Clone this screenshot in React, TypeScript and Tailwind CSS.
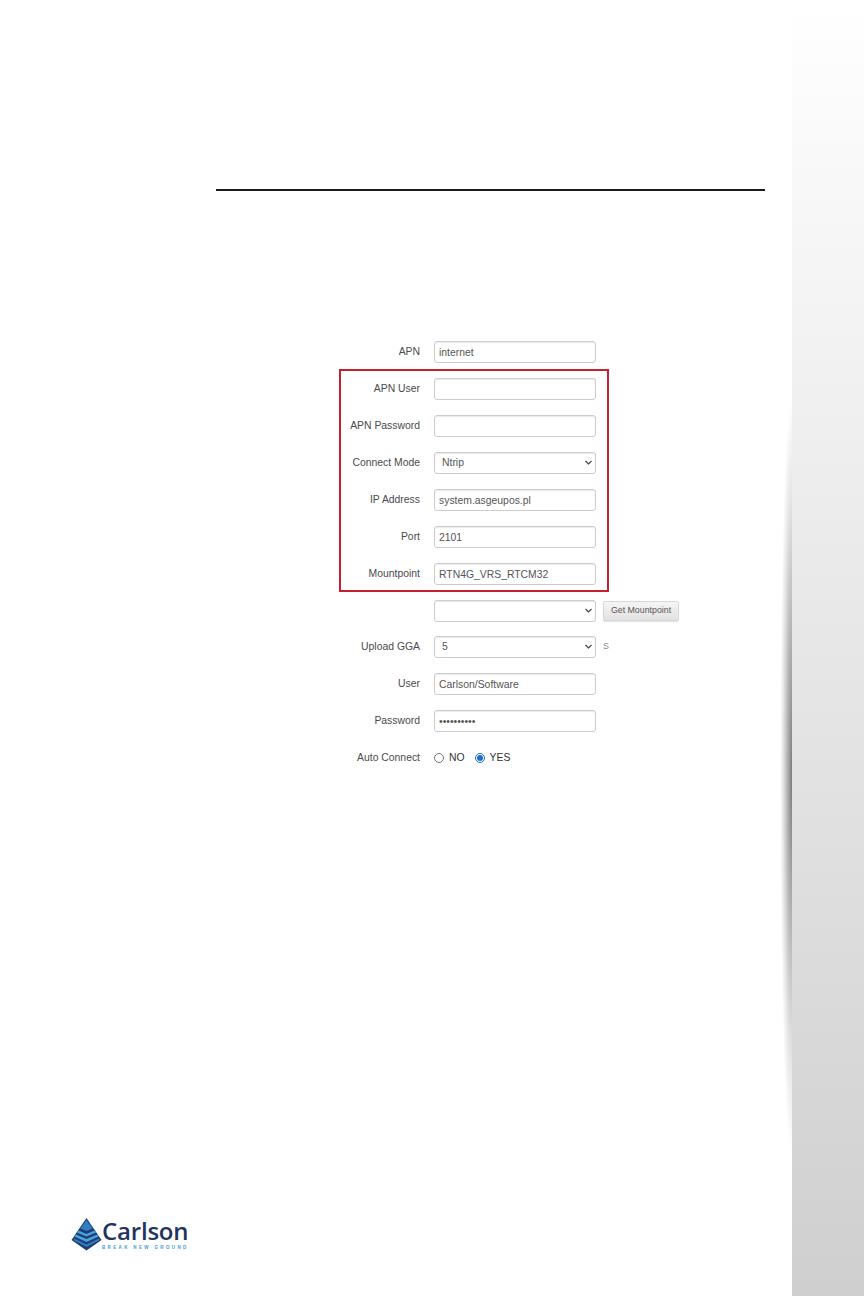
import React from 'react';

const textInput =
  'block w-[162px] h-[22px] px-[4px] border border-[#ccc] rounded-[3px] bg-white text-[10.4px] text-[#555] shadow-[inset_0_1px_1px_rgba(0,0,0,0.08)] outline-none';

function Row({
  label,
  className = '',
  children,
}: {
  label?: string;
  className?: string;
  children: React.ReactNode;
}) {
  return (
    <div className={`flex items-center h-[22px] ${className}`}>
      <div className="w-[79px] shrink-0 text-right text-[10.4px] text-[#4a4a4a]">{label}</div>
      <div className="ml-[14px] flex items-center">{children}</div>
    </div>
  );
}

function Field({ value = '', type = 'text' }: { value?: string; type?: string }) {
  return <input type={type} value={value} readOnly className={textInput} />;
}

function Select({ value = '' }: { value?: string }) {
  return (
    <div className="relative w-[162px] h-[22px] shrink-0">
      <select
        value={value}
        onChange={() => {}}
        className={`${textInput} appearance-none pl-[7px]`}
      >
        <option value={value}>{value}</option>
      </select>
      <svg
        className="absolute right-[4px] top-[8px] pointer-events-none"
        width="7"
        height="6"
        viewBox="0 0 7 6"
        fill="none"
      >
        <path d="M0.500 1l3 3 3-3" stroke="#444" strokeWidth="1.2" />
      </svg>
    </div>
  );
}

function Logo() {
  return (
    <div className="flex items-start">
      <svg width="31" height="33" viewBox="0 0 31 33" className="shrink-0">
        <path d="M15.500 0L30.500 22L15.500 32.500L0.500 22Z" fill="#1f3d73" />
        <path d="M15.500 2L21.500 10.500L15.500 13L9.500 10.500Z" fill="#2f7fc1" />
        <path d="M7.500 12.500L15.500 16L23.500 12.500L25 14.500L15.500 18.500L6 14.500Z" fill="#45a5dc" />
        <path d="M4.800 16.500L15.500 21L26.200 16.500L27.500 18.500L15.500 24L3.500 18.500Z" fill="#45a5dc" />
        <path d="M3 20.500L15.500 26.500L28 20.500L28.500 22L15.500 29L2.500 22Z" fill="#2f7fc1" />
      </svg>
      <div className="flex flex-col items-start">
        <div className="font-['Open_Sans',sans-serif] font-semibold text-[24px] leading-[25px] tracking-[-0.2px] text-[#1f3560]">
          Carlson
        </div>
        <div className="font-['Liberation_Sans',sans-serif] font-bold text-[4.500px] leading-[6px] mt-[2px] tracking-[2.35px] whitespace-nowrap text-[#3f9bd2]">
          BREAK NEW GROUND
        </div>
      </div>
    </div>
  );
}

export default function App() {
  return (
    <div className="w-[864px] h-[1296px] flex bg-white font-['Liberation_Sans',Arial,sans-serif] overflow-hidden">
      <main className="relative w-[792px] h-full flex flex-col">
        <div className="mt-[189px] ml-[216px] w-[549px] h-[2px] bg-[#1a1a1a]" />

        <section className="mt-[150px] ml-[339px] w-[270px] flex flex-col">
          <div className="pl-[2px]">
            <Row label="APN">
              <Field value="internet" />
            </Row>
          </div>

          <div className="mt-[6px] border-2 border-[#c4202f] pt-[7px] pb-[5px] flex flex-col gap-[15px]">
            <Row label="APN User">
              <Field />
            </Row>
            <Row label="APN Password">
              <Field />
            </Row>
            <Row label="Connect Mode">
              <Select value="Ntrip" />
            </Row>
            <Row label="IP Address">
              <Field value="system.asgeupos.pl" />
            </Row>
            <Row label="Port">
              <Field value="2101" />
            </Row>
            <Row label="Mountpoint">
              <Field value="RTN4G_VRS_RTCM32" />
            </Row>
          </div>

          <div className="mt-[8px] pl-[2px] flex flex-col gap-[15px]">
            <Row>
              <Select />
              <button className="ml-[7px] w-[76px] h-[20px] shrink-0 border border-[#d8d8d8] rounded-[2px] bg-gradient-to-b from-[#f5f5f5] to-[#e2e2e2] text-[8.800px] text-[#555] whitespace-nowrap shadow-[0_1px_1px_rgba(0,0,0,0.12)]">
                Get Mountpoint
              </button>
            </Row>
            <Row label="Upload GGA" className="-mt-[1px]">
              <Select value="5" />
              <span className="ml-[7px] text-[8.800px] text-[#888]">S</span>
            </Row>
            <Row label="User">
              <Field value="Carlson/Software" />
            </Row>
            <Row label="Password">
              <Field type="password" value="••••••••••" />
            </Row>
            <Row label="Auto Connect">
              <div className="flex items-center text-[10.4px] text-[#333]">
                <input type="radio" name="auto" readOnly className="w-[10px] h-[10px] m-0" />
                <span className="ml-[5px]">NO</span>
                <input type="radio" name="auto" checked readOnly className="w-[10px] h-[10px] ml-[10px] accent-[#1d6fc4]" />
                <span className="ml-[5px]">YES</span>
              </div>
            </Row>
          </div>
        </section>

        <div className="mt-auto mb-[45px] ml-[71px]">
          <Logo />
        </div>

        {/* page curl shadow against the side band */}
        <div className="absolute right-0 top-[397px] w-[12px] h-[760px] bg-[radial-gradient(ellipse_12px_380px_at_100%_50%,#7a7a7a_0%,#a8a8a8_30%,#e6e6e6_75%,transparent_100%)]" />
      </main>
      <aside className="w-[72px] h-full bg-gradient-to-b from-white to-[#cfcfcf]" />
    </div>
  );
}
